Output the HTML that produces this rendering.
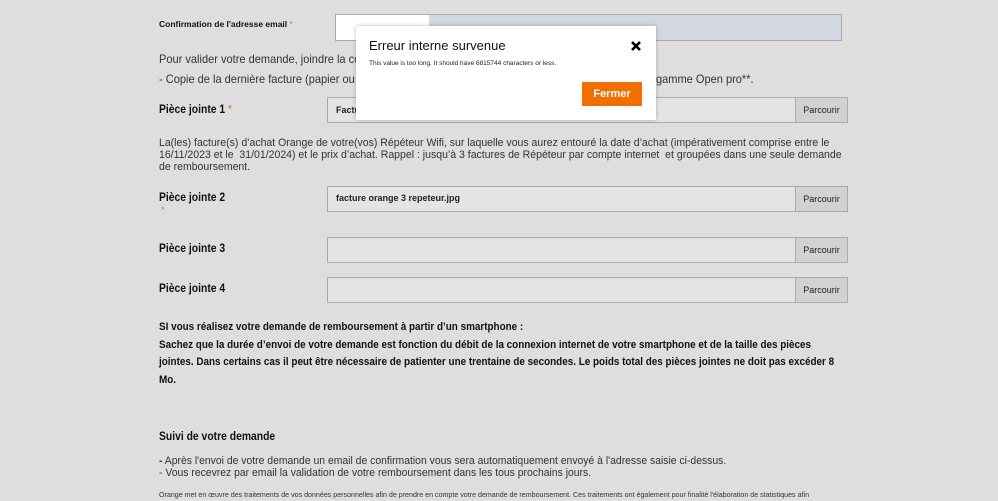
<!DOCTYPE html>
<html><head><meta charset="utf-8"><style>
*{margin:0;padding:0;box-sizing:border-box}
body{width:998px;height:501px;overflow:hidden;background:#dedede;font-family:"Liberation Sans",Arial,sans-serif;color:#222;position:relative}
.a{position:absolute;white-space:nowrap}
.t{font-size:12px;color:#333}
.b{font-weight:bold;font-size:11.5px;color:#111}
.sx{transform-origin:0 0}
.inp{position:absolute;left:327px;width:521px;height:26px;border:1px solid #aaa;background:#e4e4e4}
.inp .p{position:absolute;right:0;top:0;bottom:0;width:52px;border-left:1px solid #aaa;background:#d2d2d2;font-size:9px;line-height:24px;text-align:center;color:#222}
.st{color:#e0761a;font-weight:normal}
</style></head><body>
<div class="a" style="left:159px;top:19px;font-size:8.5px;font-weight:bold;color:#111">Confirmation de l'adresse email <span class="st">*</span></div>
<div class="a" style="left:335px;top:14px;width:507px;height:27px;border:1px solid #aaa;background:#d3d7e1"></div>
<div class="a" style="left:336px;top:15px;width:93px;height:25px;background:#fff"></div>
<div class="a t sx" style="left:159px;top:52px;transform:scaleX(.92)">Pour valider votre demande, joindre la copie</div>
<div class="a t sx" style="left:159px;top:72px;transform:scaleX(.92)">- Copie de la dernière facture (papier ou électronique)</div>
<div class="a t sx" style="left:656px;top:72px;transform:scaleX(.92)">gamme Open pro**.</div>
<div class="a b sx" style="left:159px;top:104px;transform:scaleX(.9)">Pièce jointe 1 <span class="st">*</span></div>
<div class="inp" style="top:97px"><span class="a" style="left:8px;top:7px;font-size:9px;font-weight:bold">Facture</span><div class="p">Parcourir</div></div>
<div class="a t sx" style="left:159px;top:137px;line-height:12px;font-size:11.3px;transform:scaleX(.93)">La(les) facture(s) d’achat Orange de votre(vos) Répéteur Wifi, sur laquelle vous aurez entouré la date d’achat (impérativement comprise entre le<br>16/11/2023 et le &nbsp;31/01/2024) et le prix d’achat. Rappel : jusqu’à 3 factures de Répéteur par compte internet &nbsp;et groupées dans une seule demande<br>de remboursement.</div>
<div class="a b sx" style="left:159px;top:192px;transform:scaleX(.9)">Pièce jointe 2</div>
<div class="a st" style="left:161px;top:205px;font-size:9px">*</div>
<div class="inp" style="top:186px"><span class="a" style="left:8px;top:6px;font-size:9px;font-weight:bold">facture orange 3 repeteur.jpg</span><div class="p">Parcourir</div></div>
<div class="a b sx" style="left:159px;top:243px;transform:scaleX(.9)">Pièce jointe 3</div>
<div class="inp" style="top:237px"><div class="p">Parcourir</div></div>
<div class="a b sx" style="left:159px;top:283px;transform:scaleX(.9)">Pièce jointe 4</div>
<div class="inp" style="top:277px"><div class="p">Parcourir</div></div>
<div class="a b sx" style="left:159px;top:319px;line-height:17.5px;font-size:11.3px;transform:scaleX(.875)">SI vous réalisez votre demande de remboursement à partir d’un smartphone :<br>Sachez que la durée d’envoi de votre demande est fonction du débit de la connexion internet de votre smartphone et de la taille des pièces<br>jointes. Dans certains cas il peut être nécessaire de patienter une trentaine de secondes. Le poids total des pièces jointes ne doit pas excéder 8<br>Mo.</div>
<div class="a b sx" style="left:159px;top:431px;transform:scaleX(.9)">Suivi de votre demande</div>
<div class="a t sx" style="left:159px;top:455px;line-height:12px;font-size:11.3px;transform:scaleX(.92)"><b>-</b> Après l'envoi de votre demande un email de confirmation vous sera automatiquement envoyé à l'adresse saisie ci-dessus.<br>- Vous recevrez par email la validation de votre remboursement dans les tous prochains jours.</div>
<div class="a" style="left:159px;top:491px;font-size:7.1px;color:#333">Orange met en œuvre des traitements de vos données personnelles afin de prendre en compte votre demande de remboursement. Ces traitements ont également pour finalité l'élaboration de statistiques afin</div>
<div class="a" style="left:356px;top:26px;width:300px;height:94px;background:#fff;box-shadow:0 0 4px rgba(0,0,0,.25)">
<div class="a" style="left:13px;top:12px;font-size:13px;color:#111;font-weight:500">Erreur interne survenue</div>
<svg class="a" style="left:275px;top:15px" width="10" height="10" viewBox="0 0 10 10"><path d="M1 1L9 9M9 1L1 9" stroke="#000" stroke-width="2.6"/></svg>
<div class="a" style="left:13px;top:34px;font-size:6.5px;color:#222">This value is too long. It should have 6815744 characters or less.</div>
<div class="a" style="left:226px;top:56px;width:60px;height:24px;background:#f16e00;color:#fff;font-weight:bold;font-size:11px;line-height:24px;text-align:center">Fermer</div>
</div>
</body></html>
